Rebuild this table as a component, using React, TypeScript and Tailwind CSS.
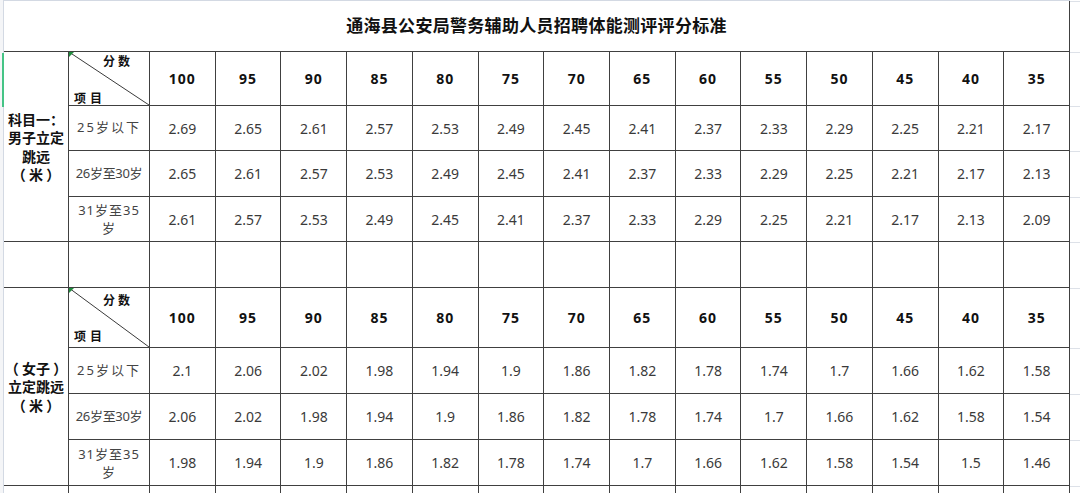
const scores = ['100', '95', '90', '85', '80', '75', '70', '65', '60', '55', '50', '45', '40', '35']

const male = [
  { label: '25岁以下', values: ['2.69', '2.65', '2.61', '2.57', '2.53', '2.49', '2.45', '2.41', '2.37', '2.33', '2.29', '2.25', '2.21', '2.17'] },
  { label: '26岁至30岁', values: ['2.65', '2.61', '2.57', '2.53', '2.49', '2.45', '2.41', '2.37', '2.33', '2.29', '2.25', '2.21', '2.17', '2.13'] },
  { label: '31岁至35岁', values: ['2.61', '2.57', '2.53', '2.49', '2.45', '2.41', '2.37', '2.33', '2.29', '2.25', '2.21', '2.17', '2.13', '2.09'] },
]

const female = [
  { label: '25岁以下', values: ['2.1', '2.06', '2.02', '1.98', '1.94', '1.9', '1.86', '1.82', '1.78', '1.74', '1.7', '1.66', '1.62', '1.58'] },
  { label: '26岁至30岁', values: ['2.06', '2.02', '1.98', '1.94', '1.9', '1.86', '1.82', '1.78', '1.74', '1.7', '1.66', '1.62', '1.58', '1.54'] },
  { label: '31岁至35岁', values: ['1.98', '1.94', '1.9', '1.86', '1.82', '1.78', '1.74', '1.7', '1.66', '1.62', '1.58', '1.54', '1.5', '1.46'] },
]

const stripRows = [2, 51, 54, 45, 46, 45, 46, 60, 46, 46, 46]

const cell = 'border-r border-b border-[#404040] flex items-center justify-center'

function AgeLabel({ label }: { label: string }) {
  if (label === '25岁以下') {
    return <span className="tracking-[2px] whitespace-nowrap">25岁以下</span>
  }
  if (label === '31岁至35岁') {
    return (
      <span className="text-center leading-[18px] tracking-[1px]">
        31岁至35
        <br />岁
      </span>
    )
  }
  return <span className="whitespace-nowrap tracking-[-0.3px]">{label}</span>
}

function DiagonalHeader({ tall }: { tall?: boolean }) {
  return (
    <div className="relative border-r border-b border-[#404040]">
      <svg className="absolute inset-0 h-full w-full" viewBox="0 0 80 54" preserveAspectRatio="none">
        <line x1="0" y1="0" x2="80" y2="54" stroke="#3a3a3a" strokeWidth="1" vectorEffect="non-scaling-stroke" />
      </svg>
      <svg className="absolute left-0 top-0 h-[5px] w-[5px]" viewBox="0 0 5 5">
        <polygon points="0,0 5,0 0,5" fill="#1e8a3c" />
      </svg>
      <div
        className={`absolute inset-0 flex flex-col justify-between text-[12px] font-bold leading-[13px] text-[#111] ${
          tall ? 'pt-[6px] pb-[4px]' : 'pt-[3px] pb-[0px]'
        }`}
      >
        <span className="self-end pr-[16px] tracking-[3px]">分数</span>
        <span className="self-start pl-[5px] tracking-[4px]">项目</span>
      </div>
    </div>
  )
}

function SubjectLines({ lines }: { lines: string[] }) {
  return (
    <div className="flex flex-col items-center font-['Noto_Sans_CJK_SC',sans-serif] [text-spacing-trim:space-all]">
      {lines.map((l) => (
        <span key={l} className="whitespace-pre">
          {l}
        </span>
      ))}
    </div>
  )
}

function Block({ rows, tall, subject }: { rows: typeof male; tall?: boolean; subject: string[] }) {
  return (
    <>
      <div className="row-span-4 border-r border-b border-[#404040] flex items-center justify-center text-center text-[14px] font-bold leading-[18.5px] text-[#111]">
        <SubjectLines lines={subject} />
      </div>
      <DiagonalHeader tall={tall} />
      {scores.map((s) => (
        <div key={s} className={`${cell} text-[14px] font-bold text-[#111] tracking-[1px]`}>
          {s}
        </div>
      ))}
      {rows.map((r) => (
        <div key={r.label} className="contents">
          <div className={`${cell} text-[13px] text-[#444]`}>
            <AgeLabel label={r.label} />
          </div>
          {r.values.map((v, i) => (
            <div key={i} className={`${cell} text-[14px] text-[#3a3a3a]`}>
              {v}
            </div>
          ))}
        </div>
      ))}
    </>
  )
}

function EmptyRow() {
  return (
    <>
      <div className="border-r border-b border-[#404040]" />
      <div className="border-r border-b border-[#404040]" />
      {scores.map((s) => (
        <div key={s} className="border-r border-b border-[#404040]" />
      ))}
    </>
  )
}

export default function App() {
  return (
    <div className="flex h-[493px] w-[1080px] overflow-hidden bg-white font-['Noto_Sans','Noto_Sans_CJK_SC',sans-serif]">
      <div className="flex w-[4px] flex-col bg-[#f4f5f7]">
        <div className="h-[53px] border-r border-[#d3d9e3]" />
        <div className="h-[54px] border-r-2 border-[#45c486]" />
        <div className="flex-1 border-r border-[#d3d9e3]" />
      </div>

      <div className="flex w-[1066px] flex-col">
        <div className="h-[2px] border-b border-[#d3d9e3]" />
        <div className="grid grid-cols-[65px_81px_repeat(14,minmax(0,1fr))] grid-rows-[51px_54px_45px_46px_45px_46px_60px_46px_46px_46px_46px]">
          <div className="col-span-16 border-r border-b border-[#404040] flex items-center justify-center text-[17px] font-bold text-[#111] tracking-[0.3px]">
            通海县公安局警务辅助人员招聘体能测评评分标准
          </div>

          <Block rows={male} subject={['科目一：', '男子立定', '跳远', '（ 米 ）']} />

          <EmptyRow />

          <Block rows={female} tall subject={['（ 女子 ）', '立定跳远', '（ 米 ）']} />

          <EmptyRow />
        </div>
      </div>

      <div className="flex w-[10px] flex-col">
        {stripRows.map((h, i) => (
          <div key={i} className="border-b border-[#dde1e8]" style={{ height: h }} />
        ))}
      </div>
    </div>
  )
}
